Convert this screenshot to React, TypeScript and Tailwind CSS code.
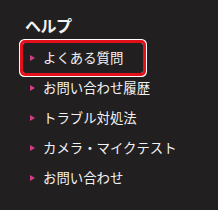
import React from "react";

const items = ["よくある質問", "お問い合わせ履歴", "トラブル対処法", "カメラ・マイクテスト", "お問い合わせ"];

export default function App() {
  return (
    <div
      className="w-[218px] h-[210px] bg-[#221f20] pt-[13px] pl-[19px] text-[#f2f2f2]"
      style={{ fontFamily: '"Noto Sans CJK JP", "Noto Sans", sans-serif' }}
    >
      <h2 className="pl-[6px] text-[16px] font-bold leading-[24px] tracking-[-0.5px]">ヘルプ</h2>
      <ul className="mt-[6px]">
        {items.map((label, i) => (
          <li
            key={label}
            className={`ml-[4px] h-[30px] flex items-center pl-[7px] ${
              i === 0 ? "w-[120px] rounded-[2px] shadow-[0_0_0_3px_#e3101b,0_0_0_4px_#ffffff]" : ""
            }`}
          >
            <span className="w-0 h-0 border-y-[3px] border-y-transparent border-l-[5px] border-l-[#cf3f83]" />
            <span className="ml-[8px] text-[13.4px] leading-none">{label}</span>
          </li>
        ))}
      </ul>
    </div>
  );
}
